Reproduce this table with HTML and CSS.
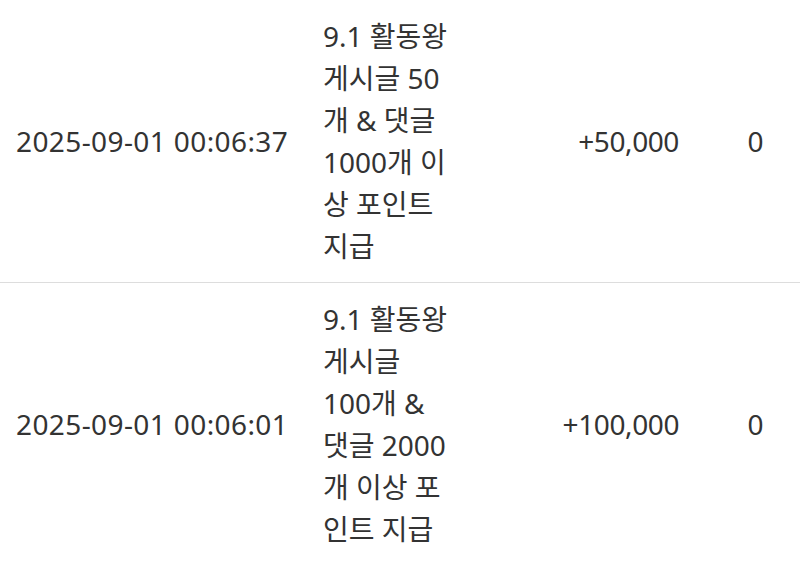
FILE: index.html
```html
<!DOCTYPE html>
<html lang="ko">
<head>
<meta charset="utf-8">
<link rel="stylesheet" href="styles.css">
</head>
<body>
<table class="history">
  <colgroup>
    <col class="c-date">
    <col class="c-desc">
    <col class="c-amount">
    <col class="c-balance">
  </colgroup>
  <tbody>
    <tr class="row">
      <td class="date">2025-09-01 00:06:37</td>
      <td class="desc">9.1 활동왕 게시글 50개 &amp; 댓글 1000개 이상 포인트 지급</td>
      <td class="amount">+50,000</td>
      <td class="balance">0</td>
    </tr>
    <tr class="row">
      <td class="date">2025-09-01 00:06:01</td>
      <td class="desc">9.1 활동왕 게시글 100개 &amp; 댓글 2000개 이상 포인트 지급</td>
      <td class="amount">+100,000</td>
      <td class="balance">0</td>
    </tr>
  </tbody>
</table>
</body>
</html>
```

FILE: styles.css
```css
html, body {
  margin: 0;
  padding: 0;
  background: #ffffff;
}

body {
  font-family: "Noto Sans", "Noto Sans CJK KR", sans-serif;
  font-size: 28px;
  line-height: 1.5;
  color: #333333;
  overflow: hidden;
}

.history {
  width: 800px;
  table-layout: fixed;
  border-collapse: collapse;
}

.c-date { width: 307px; }
.c-desc { width: 160px; }
.c-amount { width: 228px; }
.c-balance { width: 105px; }

.row td {
  padding: 15px 16px 15px;
  vertical-align: middle;
  border-bottom: 1px solid #dddddd;
}

.row .desc {
  word-break: normal;
  line-break: normal;
}

.row .date {
  white-space: nowrap;
  letter-spacing: 0.4px;
}

.row .amount {
  text-align: right;
  letter-spacing: -0.4px;
}

.row .balance {
  text-align: center;
  padding-right: 0;
}
```
